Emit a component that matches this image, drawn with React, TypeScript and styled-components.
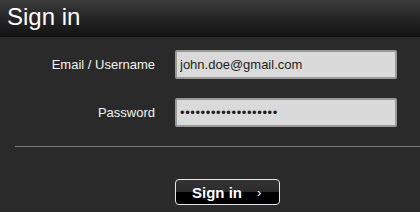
import styled, { createGlobalStyle } from "styled-components";

const GlobalStyle = createGlobalStyle`
    html, body {
        margin: 0;
        padding: 0;
        background: #2a2a2a;
    }
    body {
        font-family: "Liberation Sans", Arial, sans-serif;
    }
`;

const Page = styled.div`
    display: flex;
    flex-direction: column;
    width: 420px;
    height: 212px;
    background: #2a2a2a;
    overflow: hidden;
`;

const Header = styled.header`
    height: 37px;
    box-sizing: border-box;
    padding-left: 7px;
    display: flex;
    align-items: center;
    background: linear-gradient(to bottom, #3c3c3c 0%, #232323 55%, #121212 100%);
`;

const Title = styled.h1`
    margin: 0;
    font-size: 24px;
    font-weight: normal;
    color: #ffffff;
    line-height: 1;
    padding-bottom: 4px;
`;

const Form = styled.form`
    display: grid;
    grid-template-columns: 155px 222px;
    column-gap: 20px;
    row-gap: 19px;
    align-items: center;
    padding-top: 13px;
`;

const Label = styled.label`
    text-align: right;
    font-size: 13px;
    color: #f2f2f2;
`;

const Input = styled.input<{ $secret?: boolean }>`
    box-sizing: border-box;
    height: 29px;
    width: 222px;
    margin: 0;
    padding: 0 3px;
    border: 2px solid #9a9a9a;
    border-radius: 2px;
    background: #dadada;
    color: #1e1e1e;
    font-family: "Liberation Sans", Arial, sans-serif;
    font-size: 13px;
    letter-spacing: ${(p) => (p.$secret ? "0.6px" : "normal")};
    outline: none;
`;

const Divider = styled.hr`
    margin: 19px 0 0 15px;
    border: none;
    border-top: 1px solid #7a7a7a;
    height: 0;
`;

const ButtonRow = styled.div`
    display: flex;
    padding: 32px 0 0 175px;
`;

const SubmitButton = styled.button`
    box-sizing: border-box;
    width: 105px;
    height: 26px;
    display: flex;
    align-items: center;
    gap: 15px;
    padding: 0 0 0 16px;
    border: 1px solid #e6e6e6;
    border-radius: 4px;
    background: linear-gradient(to bottom, #333333 0%, #2c2c2c 48%, #000000 52%, #000000 100%);
    color: #ffffff;
    font-family: "Liberation Sans", Arial, sans-serif;
    font-size: 15px;
    font-weight: bold;
    cursor: pointer;
`;

const Chevron = styled.span`
    font-size: 13px;
    font-weight: normal;
    padding-top: 1px;
`;

export default function App() {
    return (
        <>
            <GlobalStyle />
            <Page>
                <Header>
                    <Title>Sign in</Title>
                </Header>
                <Form onSubmit={(e) => e.preventDefault()}>
                    <Label htmlFor="user">Email / Username</Label>
                    <Input id="user" type="text" defaultValue="john.doe@gmail.com" />
                    <Label htmlFor="pass">Password</Label>
                    <Input id="pass" type="password" $secret defaultValue="secretpassword12345" />
                </Form>
                <Divider />
                <ButtonRow>
                    <SubmitButton type="button">
                        Sign in <Chevron>›</Chevron>
                    </SubmitButton>
                </ButtonRow>
            </Page>
        </>
    );
}
